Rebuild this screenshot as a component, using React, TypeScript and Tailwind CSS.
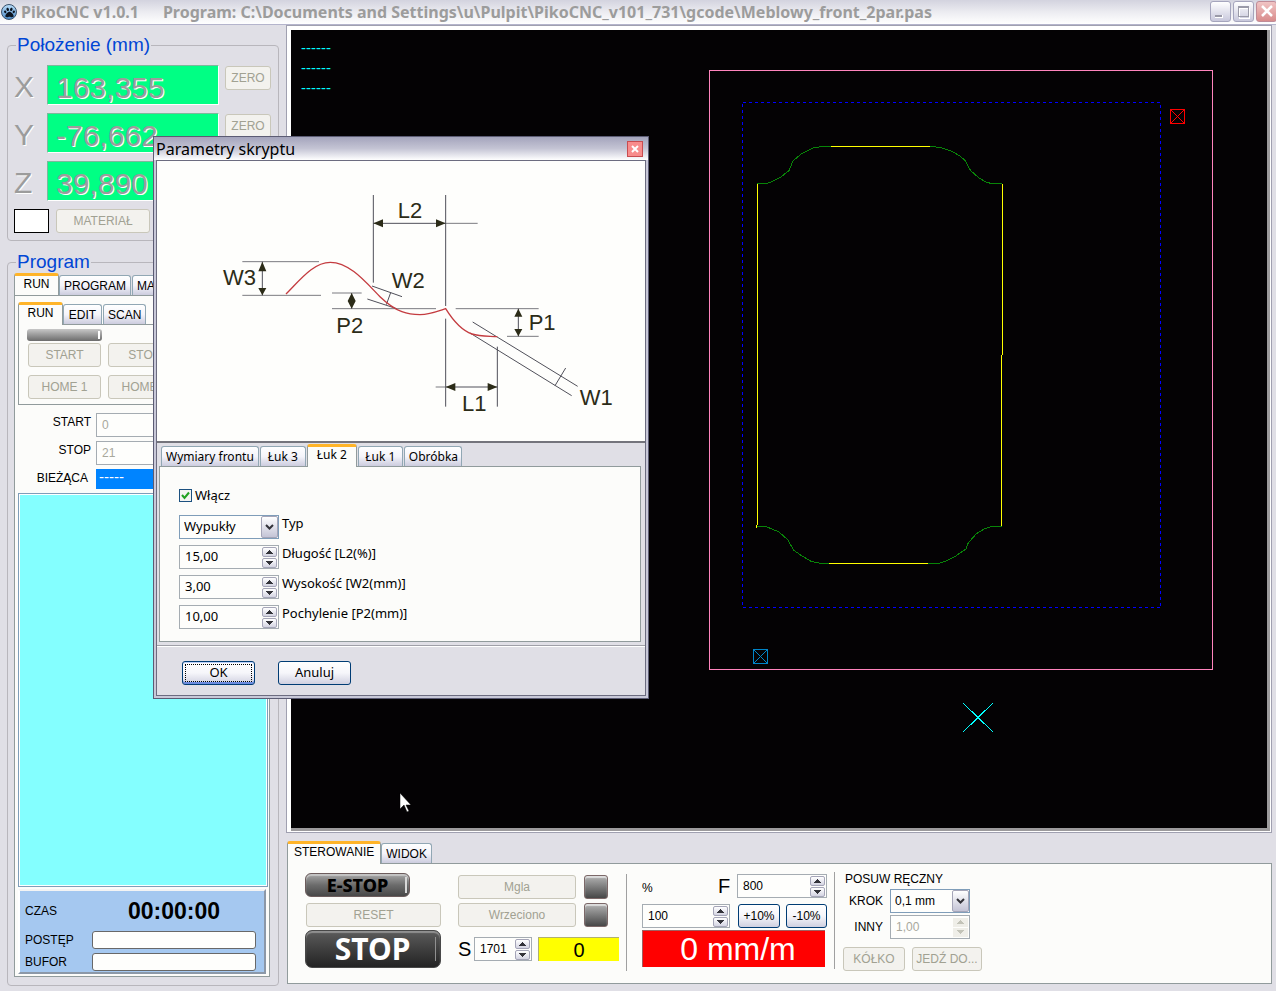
import React from 'react'
import { FaPaw } from 'react-icons/fa'

type TabItem = { label: string; active?: boolean; className?: string }

const frontTabs: TabItem[] = [
  { label: 'Wymiary frontu' },
  { label: 'Łuk 3', className: 'w-[46px]' },
  { label: 'Łuk 2', active: true, className: 'mr-px w-[50px]' },
  { label: 'Łuk 1', className: 'w-[45px]' },
  { label: 'Obróbka', className: 'w-[58px]' },
]

const axes = [
  { name: 'X', value: '163,355' },
  { name: 'Y', value: '-76,662' },
  { name: 'Z', value: '39,890' },
]

const params = [
  { id: 'dlugosc', label: 'Długość [L2(%)]', value: '15,00' },
  { id: 'wysokosc', label: 'Wysokość [W2(mm)]', value: '3,00' },
  { id: 'pochylenie', label: 'Pochylenie [P2(mm)]', value: '10,00' },
]

function Tabs({ items }: { items: TabItem[] }) {
  return (
    <div role="tablist" className="flex items-end whitespace-nowrap">
      {items.map((t) =>
        t.active ? (
          <button
            key={t.label}
            role="tab"
            aria-selected="true"
            className={`relative -mb-px h-[23px] rounded-t-[3px] border-x border-t-[3px] border-x-[#919b9c] border-t-[#ffb428] bg-[#fcfcfa] px-[6px] pb-1 leading-4 ${t.className ?? ''}`}
          >
            {t.label}
          </button>
        ) : (
          <button
            key={t.label}
            role="tab"
            aria-selected="false"
            className={`mr-px h-5 rounded-t-[3px] border border-b-0 border-[#91a7b4] bg-linear-to-b from-white via-[#f4f4fa] to-[#ccccde] px-1 leading-4 ${t.className ?? ''}`}
          >
            {t.label}
          </button>
        )
      )}
    </div>
  )
}

// disabled grey button
function GreyButton({ children, className = '' }: { children: React.ReactNode; className?: string }) {
  return (
    <button
      disabled
      className={`h-6 shrink-0 whitespace-nowrap rounded-[3px] border border-[#c9c7ba] bg-[#f3f2ee] text-xs text-[#a1a192] ${className}`}
    >
      {children}
    </button>
  )
}

function BlueButton({ children, className = '' }: { children: React.ReactNode; className?: string }) {
  return (
    <button
      className={`h-6 rounded-[3px] border border-[#003c74] bg-linear-to-b from-white via-[#f6f6fa] to-[#d0d0e0] text-black ${className}`}
    >
      {children}
    </button>
  )
}

function Arrow({ up = false, off = false }: { up?: boolean; off?: boolean }) {
  return (
    <svg width="7" height="4" viewBox="0 0 7 4" shapeRendering="crispEdges" fill={off ? '#c3c3b8' : '#33333a'}>
      {up ? <path d="M3 0h1v1h1v1h1v1h1v1H0V3h1V2h1V1h1z" /> : <path d="M0 0h7v1H6v1H5v1H4v1H3V3H2V2H1V1H0z" />}
    </svg>
  )
}

function Spinner({ id, value, label, disabled = false, className = '' }: {
  id: string
  value: string
  label?: string
  disabled?: boolean
  className?: string
}) {
  const btn = disabled
    ? 'flex h-[9px] w-[15px] items-center justify-center bg-[#efeee8]'
    : 'flex h-[10px] w-[15px] items-center justify-center rounded-[2px] border border-[#a5a5b8] bg-linear-to-b from-white to-[#d4d4e2]'
  return (
    <div className={`flex h-6 items-center border border-[#a5acb2] bg-[#fefefc] pr-px ${className}`}>
      <input
        id={id}
        aria-label={label}
        defaultValue={value}
        disabled={disabled}
        className={`w-0 min-w-0 flex-1 bg-transparent pl-[5px] outline-none ${disabled ? 'text-[#a8a89c]' : 'text-black'}`}
      />
      <div className="flex flex-col gap-px">
        <button className={btn} disabled={disabled} aria-label="Więcej">
          <Arrow up off={disabled} />
        </button>
        <button className={btn} disabled={disabled} aria-label="Mniej">
          <Arrow off={disabled} />
        </button>
      </div>
    </div>
  )
}

function Combo({ id, value, className = '' }: { id: string; value: string; className?: string }) {
  return (
    <div className={`relative h-6 border border-[#7f9db9] bg-[#fefefc] ${className}`}>
      <select id={id} defaultValue={value} className="h-full w-full appearance-none bg-transparent pl-1 text-black outline-none">
        <option>{value}</option>
      </select>
      <span className="pointer-events-none absolute inset-y-0 right-0 flex w-[17px] items-center justify-center rounded-[2px] border border-[#a5a5b8] bg-linear-to-b from-white to-[#c4c4d6]">
        <svg width="9" height="6" viewBox="0 0 9 6" fill="none" stroke="#33333a" strokeWidth="2">
          <path d="M1 1l3.500 3.500L8 1" />
        </svg>
      </span>
    </div>
  )
}

function TitleBar() {
  return (
    <header className="flex h-[25px] items-center border-b border-[#b4b4cc] bg-linear-to-b from-[#d3d3df] via-[#ececf1] to-white pl-px font-['Noto_Sans',sans-serif] text-base font-bold text-[#9c9c9c]">
      <span className="mr-1 flex size-4 items-center justify-center rounded-full border border-[#38506c] bg-linear-to-b from-[#b8dcf8] to-[#4c8cc8]">
        <FaPaw size={11} color="#0c1420" />
      </span>
      <h1 className="flex-1 whitespace-nowrap text-base leading-6">
        <span className="mr-6">PikoCNC v1.0.1</span>
        <span>Program: C:\Documents and Settings\u\Pulpit\PikoCNC_v101_731\gcode\Meblowy_front_2par.pas</span>
      </h1>
      <div className="-mr-px flex gap-[2px] pb-px">
        <button aria-label="Minimalizuj" className="size-[21px] rounded-[3px] border border-[#a5a5bd] bg-linear-to-b from-white to-[#c8c8dc]">
          <svg viewBox="0 0 19 19" shapeRendering="crispEdges">
            <path d="M4 13h8v3H4z" fill="#fff" />
            <path d="M4 13h7v2H4z" fill="#9a9aa8" />
          </svg>
        </button>
        <button aria-label="Maksymalizuj" className="size-[21px] rounded-[3px] border border-[#a5a5bd] bg-linear-to-b from-white to-[#c8c8dc]">
          <svg viewBox="0 0 19 19" shapeRendering="crispEdges" fill="none">
            <path d="M5 6h10v10H5z" stroke="#fff" />
            <path d="M4.500 4.500h10v10h-10zM4 5.500h11" stroke="#9a9aa8" />
          </svg>
        </button>
        <button aria-label="Zamknij" className="size-[21px] rounded-[3px] border border-[#c08c98] bg-linear-to-b from-[#f0c4c4] to-[#d88c8c]">
          <svg viewBox="0 0 19 19" fill="none" stroke="#fff" strokeWidth="2.500">
            <path d="M5 4l10 10M15 4l-10 10" />
          </svg>
        </button>
      </div>
    </header>
  )
}

function Position() {
  return (
    <fieldset className="min-w-0 rounded-[4px] border border-[#b8b6bc] px-[6px] pb-[7px]">
      <legend className="ml-[2px] px-px text-[19px] leading-5 text-[#0046d5]">Położenie (mm)</legend>
      <div className="flex flex-col gap-2 pt-[10px]">
        {axes.map((a) => (
          <div key={a.name} className="flex h-10 items-start">
            <span className="w-[33px] text-[30px] leading-[44px] text-[#9c9c9c] [text-shadow:1px_1px_0_#fff]">{a.name}</span>
            <output className="h-10 min-w-0 flex-1 border border-t-[#7cb89c] border-r-white border-b-white border-l-[#7cb89c] bg-[#00ff84] pl-2 text-[30px] leading-[44px] text-[#9c9c9c] [text-shadow:1px_1px_0_#fff]">
              {a.value}
            </output>
            <GreyButton className="mt-px mr-px ml-[6px] w-[46px]">ZERO</GreyButton>
          </div>
        ))}
        <div className="flex gap-[7px]">
          <span className="h-6 w-[35px] border border-black bg-white"></span>
          <GreyButton className="w-[94px]">MATERIAŁ</GreyButton>
        </div>
      </div>
    </fieldset>
  )
}

function Program() {
  return (
    <fieldset className="mt-[11px] flex min-w-0 flex-1 flex-col rounded-[4px] border border-[#b8b6bc] pt-px pr-2 pb-2 pl-[6px]">
      <legend className="ml-[2px] px-px text-[19px] leading-5 text-[#0046d5]">Program</legend>
      <div className="overflow-hidden">
        <Tabs items={[{ label: 'RUN', active: true, className: 'w-[45px]' }, { label: 'PROGRAM' }, { label: 'MANUAL' }]} />
      </div>
      <div className="flex flex-1 flex-col border border-[#919b9c] bg-[#fcfcfa] pt-[6px] pr-px pb-[2px] pl-[3px]">
        <Tabs items={[{ label: 'RUN', active: true, className: 'w-[45px]' }, { label: 'EDIT', className: 'w-[39px]' }, { label: 'SCAN' }]} />
        <div className="overflow-hidden border border-[#919b9c] pt-1 pb-[5px] pl-2">
          <div className="mb-[2px] flex h-3 w-[75px] justify-end rounded-[3px] bg-linear-to-b from-[#c8c8c8] to-[#6c6c6c] py-[2px] pr-[2px]">
            <span className="w-[2px] bg-white"></span>
          </div>
          <div className="grid grid-cols-[73px_73px_56px] gap-x-[7px] gap-y-2 pl-px">
            <GreyButton>START</GreyButton>
            <GreyButton>STOP</GreyButton>
            <GreyButton>PAUZA</GreyButton>
            <GreyButton>HOME 1</GreyButton>
            <GreyButton>HOME 2</GreyButton>
            <GreyButton>PARK</GreyButton>
          </div>
        </div>
        <div className="grid grid-cols-[73px_1fr] gap-x-[5px] gap-y-1 pt-2 pb-1">
          <label htmlFor="start" className="text-right leading-[18px]">START</label>
          <input id="start" disabled defaultValue="0" className="h-6 min-w-0 border border-[#a5acb2] bg-[#fefefc] pl-[5px] text-[#a8a89c]" />
          <label htmlFor="stop" className="text-right leading-[18px]">STOP</label>
          <input id="stop" disabled defaultValue="21" className="h-6 min-w-0 border border-[#a5acb2] bg-[#fefefc] pl-[5px] text-[#a8a89c]" />
          <label htmlFor="line" className="pr-[3px] text-right leading-[18px]">BIEŻĄCA</label>
          <output id="line" className="h-5 bg-[#0084ff] pl-[3px] text-[15px] leading-4 text-white">-----</output>
        </div>
        <div className="flex-1 border border-[#7f9db9] bg-[#84ffff] outline outline-white -outline-offset-2"></div>
        <div className="mt-[2px] mr-[2px] grid grid-cols-[67px_1fr] items-center gap-y-1 border-2 border-t-[#f4f4f4] border-r-[#8c98a8] border-b-[#8c98a8] border-l-white bg-[#a5c8f0] pt-1 pr-2 pb-px pl-[5px]">
          <span>CZAS</span>
          <output className="text-center text-[23px] leading-8 font-bold">00:00:00</output>
          <span>POSTĘP</span>
          <div role="progressbar" aria-label="POSTĘP" className="h-[18px] rounded-[3px] border border-[#686868] bg-[#fefefc]"></div>
          <span>BUFOR</span>
          <div role="progressbar" aria-label="BUFOR" className="h-[18px] rounded-[3px] border border-[#686868] bg-[#fefefc]"></div>
        </div>
      </div>
    </fieldset>
  )
}

function Viewport() {
  return (
    <section className="mr-[4px] flex flex-1 border border-[#a0a0b0] bg-white p-1 pr-px pb-px">
      <div className="relative flex-1 border-r-[3px] border-b-[3px] border-[#9c9a9c] bg-[#040204]">
        <svg className="absolute inset-0 h-full w-full" viewBox="291 30 976 798" preserveAspectRatio="xMinYMin meet" fill="none" shapeRendering="crispEdges">
          <rect x="709.500" y="70.500" width="503" height="599" stroke="#ff84bd" />
          <rect x="742.500" y="102.500" width="418" height="505" stroke="#0000ff" strokeDasharray="3 3" />
          <path stroke="#ff0000" d="M1170.500 109.500h14v14h-14zl14 14M1184.500 109.500l-14 14" />
          <path stroke="#0084c8" d="M753.500 649.500h14v14h-14zl14 14M767.500 649.500l-14 14" />
          <path stroke="#ffff00" d="M831 146.500H930M1002.500 184V355M1001.500 355V527M757.500 184V525M756.500 525v3M829 563.500H928" />
          <path
            stroke="#088408"
            d="M757 183.500H766.500L771 182L781 177L789 170.500L793 161L801 154L814 147.500L824 146.500H831
               M930 146.500L941 147.500L952 151.500L960 156L965 160.500L970.500 170.500L979 178L987 182.500L992 183.500H1002
               M757 526.500L767 527L779 532L788 540L793.500 550L802 556L811.500 561.500L821 563.500H829
               M928 563.500H939L947 560.500L955 556.500L966 549L967.500 544L976 534L984 529L991 526.500H1002"
          />
          <path stroke="#00ffff" d="M963 703l30 29M963 732l30-29M971 711l7 7M971 725l7-7" />
        </svg>
        <div className="flex flex-col pt-2 pl-[10px] text-[15px] leading-5 text-[#00ffff]">
          <span>------</span>
          <span>------</span>
          <span>------</span>
        </div>
      </div>
    </section>
  )
}

function Led() {
  return (
    <span className="size-6 rounded-[3px] border border-[#7c6868] bg-linear-to-b from-[#b4b4b4] via-[#7c7c7c] to-[#484848] shadow-[inset_0_2px_1px_#dcdcdc]"></span>
  )
}

function Controls() {
  return (
    <section className="mt-2 mr-[4px] mb-[7px] ml-px">
      <Tabs items={[{ label: 'STEROWANIE', active: true }, { label: 'WIDOK' }]} />
      <div className="flex items-start border border-[#919b9c] bg-[#fcfcfa] pt-2 pb-3 pl-[17px]">
        <div className="mt-px flex w-[136px] flex-col gap-[3px]">
          <button className="mb-[3px] flex h-6 w-[105px] items-center rounded-[6px] border border-[#6c5c5c] bg-linear-to-b from-[#a8a8a8] via-[#6c6c6c] to-[#484848] pl-1 font-['Noto_Sans',sans-serif] text-lg leading-6 font-extrabold text-black shadow-[inset_0_2px_1px_#c4c4c4]">
            <span className="flex-1">E-STOP</span>
            <span className="mr-[2px] h-4 w-[2px] bg-[#d8d8d8]"></span>
          </button>
          <GreyButton className="ml-px">RESET</GreyButton>
          <button className="flex h-[38px] items-center rounded-[7px] border border-[#484848] bg-linear-to-b from-[#5c5c5c] to-[#242424] pl-1 font-['Noto_Sans',sans-serif] text-[30px] leading-9 font-bold text-white shadow-[inset_0_2px_1px_#909090]">
            <span className="flex-1">STOP</span>
            <span className="mr-1 h-6 w-px bg-[#909090]"></span>
          </button>
        </div>
        <div className="mt-[3px] ml-[17px] flex w-[161px] flex-col gap-1">
          <div className="flex justify-between pr-[11px]">
            <GreyButton className="w-[118px]">Mgla</GreyButton>
            <Led />
          </div>
          <div className="flex justify-between pr-[11px]">
            <GreyButton className="w-[118px]">Wrzeciono</GreyButton>
            <Led />
          </div>
          <div className="mt-[6px] flex items-center">
            <label htmlFor="s" className="w-4 text-xl leading-6">S</label>
            <Spinner id="s" value="1701" className="w-[58px]" />
            <output className="ml-[6px] h-6 flex-1 border-t border-l border-[#b0b070] bg-[#ffff00] text-center text-xl leading-6">0</output>
          </div>
        </div>
        <div className="mt-[2px] ml-[7px] h-[97px] w-px bg-[#a0a0a0]"></div>
        <div className="mt-[2px] ml-[15px] w-[185px]">
          <div className="flex items-center">
            <span className="flex-1 pt-1">%</span>
            <label htmlFor="f" className="w-[19px] text-xl leading-6">F</label>
            <Spinner id="f" value="800" className="w-[90px]" />
          </div>
          <div className="mt-[6px] flex">
            <Spinner id="proc" label="%" value="100" className="mr-2 w-[88px]" />
            <BlueButton className="mr-[6px] w-[42px]">+10%</BlueButton>
            <BlueButton className="w-[41px]">-10%</BlueButton>
          </div>
          <output className="mt-[2px] block h-[37px] w-[183px] border-t border-l border-[#a06060] bg-[#ff0000] pl-2 text-center text-[32px] leading-9 text-white">
            0 mm/m
          </output>
        </div>
        <div className="ml-[7px] h-[97px] w-px bg-[#a0a0a0]"></div>
        <div className="ml-2 grid grid-cols-[40px_80px] gap-x-[7px] gap-y-[2px]">
          <span className="col-span-2 pl-[2px] leading-[15px]">POSUW RĘCZNY</span>
          <label htmlFor="krok" className="text-right leading-6">KROK</label>
          <Combo id="krok" value="0,1 mm" />
          <label htmlFor="inny" className="text-right leading-6">INNY</label>
          <Spinner id="inny" value="1,00" disabled />
          <div className="col-span-2 mt-[6px] flex gap-[7px]">
            <GreyButton className="w-[62px]">KÓŁKO</GreyButton>
            <GreyButton className="w-[70px]">JEDŹ DO...</GreyButton>
          </div>
        </div>
      </div>
    </section>
  )
}

// cross-section of the front with the dimension names
function Profile() {
  return (
    <svg className="block h-auto w-full" viewBox="21 93 1464 840" fill="none" strokeWidth="3">
      <g stroke="#7b7b80">
        <path d="M277 395H507M277 496H513M546 489H635M546 536H858M917 536H1166M1071 619H1166M886 280H983M857 771H886" />
      </g>
      <g stroke="#50505a">
        <path d="M670 195V458M887 195V528M887 566V830M1042 650V830M670 280H887M887 771H1042M337 395V496M605 489V536M1105 536V619" />
        <path d="M666 468L756 500M652 507L740 536M722 488L709 524M968 576L1283 769M960 609L1265 797M1247 714L1215 767" />
      </g>
      <g fill="#2c2c18">
        <path d="M670 280l29-12v24zM887 280l-29-12v24zM887 771l29-12v24zM1042 771l-29-12v24z" />
        <path d="M337 395l-12 29h24zM337 496l-12-22h24zM605 489l-12 24 12 23 12-23zM1105 536l-12 24h24zM1105 619l-12-22h24z" />
      </g>
      <path
        stroke="#c43c40"
        strokeWidth="4"
        d="M408 492C450 450 490 397 541 397C600 397 650 460 690 500C740 548 775 554 810 554C840 553 865 543 887 536C905 565 930 600 966 612C990 620 1020 618 1042 620"
      />
      <g fill="#2c2c18" fontFamily="Liberation Sans, sans-serif" fontSize="66">
        <text x="743" y="264">L2</text>
        <text x="219" y="466">W3</text>
        <text x="725" y="473">W2</text>
        <text x="559" y="609">P2</text>
        <text x="1136" y="599">P1</text>
        <text x="936" y="843">L1</text>
        <text x="1289" y="824">W1</text>
      </g>
    </svg>
  )
}

function ScriptDialog() {
  return (
    <div
      role="dialog"
      aria-labelledby="dlg-title"
      className="absolute top-[136px] left-[153px] w-[496px] border border-[#5c5c74] bg-[#c8c8d8] font-['Noto_Sans',sans-serif] text-[13px]"
    >
      <div className="flex h-[23px] items-center justify-between bg-linear-to-b from-[#a4a4bc] via-[#c4c4d4] to-white pr-[5px] pl-[2px]">
        <h2 id="dlg-title" className="text-base leading-6">Parametry skryptu</h2>
        <button aria-label="Zamknij" className="size-4 border border-[#c84c50] bg-[#f88c8c]">
          <svg viewBox="0 0 14 14" fill="none" stroke="#fff" strokeWidth="2">
            <path d="M4 4l6 6M10 4l-6 6" />
          </svg>
        </button>
      </div>
      <div className="mx-[2px] mb-[2px] border border-[#6c6c80] bg-[#e0dfe6]">
        <div className="border-b-2 border-[#74747c] bg-[#fefefc]">
          <Profile />
        </div>
        <div className="border-b border-[#a0a0a8] px-[2px] pt-px pb-[3px] shadow-[0_1px_0_#fff]">
          <div className="pl-[2px] text-xs">
            <Tabs items={frontTabs} />
          </div>
          <div className="mr-[2px] flex flex-col gap-[6px] border border-[#919b9c] bg-[#fcfcfa] pt-5 pb-3 pl-[19px]">
            <label className="mb-[6px] flex items-center gap-[3px] leading-4">
              <input type="checkbox" defaultChecked className="peer sr-only" />
              <span className="flex size-[13px] items-center justify-center border border-[#1c5180] bg-[#f4f4f2]">
                <svg width="9" height="9" viewBox="0 0 9 9" fill="none" stroke="#21a121" strokeWidth="2">
                  <path d="M1 4l2.500 3L8 1.500" />
                </svg>
              </span>
              Włącz
            </label>
            <div className="flex items-start gap-[3px]">
              <Combo id="typ" value="Wypukły" className="w-[100px]" />
              <label htmlFor="typ" className="leading-4">Typ</label>
            </div>
            {params.map((p) => (
              <div key={p.id} className="flex items-start gap-[3px]">
                <Spinner id={p.id} value={p.value} className="w-[100px]" />
                <label htmlFor={p.id} className="leading-4">{p.label}</label>
              </div>
            ))}
          </div>
        </div>
        <div className="flex gap-[23px] pt-[15px] pb-[10px] pl-[25px]">
          <BlueButton className="w-[73px] shadow-[inset_0_-2px_0_#6c8ce0,inset_0_1px_0_#bcd0f8] outline-1 -outline-offset-4 outline-dotted outline-black">
            OK
          </BlueButton>
          <BlueButton className="w-[73px]">Anuluj</BlueButton>
        </div>
      </div>
    </div>
  )
}

export default function App() {
  return (
    <div className="relative flex min-h-screen flex-col overflow-hidden bg-[#e0dfe6] font-['Liberation_Sans',sans-serif] text-xs text-black">
      <TitleBar />
      <main className="flex flex-1">
        <aside className="flex w-[286px] shrink-0 flex-col px-[7px] pt-[10px] pb-[5px]">
          <Position />
          <Program />
        </aside>
        <div className="flex min-w-0 flex-1 flex-col">
          <Viewport />
          <Controls />
        </div>
      </main>
      <ScriptDialog />
      <svg className="pointer-events-none absolute top-[792px] left-[399px]" width="13" height="21" viewBox="0 0 13 21">
        <path d="M1 1v16l4-4 3 7 2-1-3-6h5z" fill="#fff" stroke="#000" strokeWidth="0.500" />
      </svg>
    </div>
  )
}
